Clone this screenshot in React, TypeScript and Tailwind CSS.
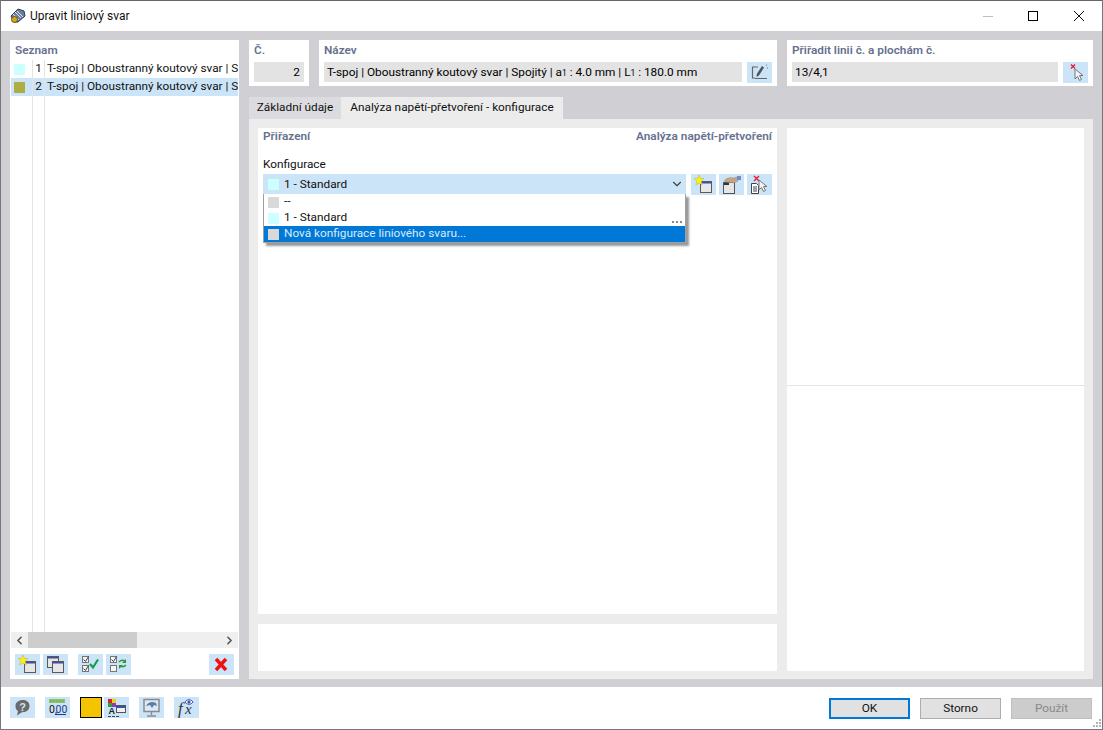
import type { ReactNode } from "react";
import { ChevronDown, ChevronLeft, ChevronRight } from "lucide-react";

const Win = ({ x, y, w = 11, h = 11 }: { x: number; y: number; w?: number; h?: number }) => (
  <g>
    <rect x={x} y={y} width={w} height={h} fill="#e6e6e6" stroke="#5a5a5a" />
    <rect x={x + 0.5} y={y + 0.5} width={w - 1} height={1.5} fill="#3b4fa8" />
  </g>
);

const Star = ({ x, y }: { x: number; y: number }) => (
  <path
    transform={`translate(${x} ${y})`}
    d="M5 0l1.400 3.300L10 3.500 7.300 6l.9 4L5 8 1.800 10l.9-4L0 3.500l3.600-.2z"
    fill="#f8f01c"
    stroke="#b8b04a"
    strokeWidth="0.5"
  />
);

const Box = ({ x, y, check }: { x: number; y: number; check?: boolean }) => (
  <g>
    <rect x={x} y={y} width={6} height={6} fill="#f4f4f4" stroke="#777" />
    {check ? <path d={`M${x + 1} ${y + 3}l2 2 3-5`} fill="none" stroke="#444" /> : null}
  </g>
);

const Icon = ({ children }: { children: ReactNode }) => (
  <svg width="25" height="21" viewBox="0 0 25 21">
    {children}
  </svg>
);

const icons: Record<string, ReactNode> = {
  newWin: (
    <Icon>
      <Win x={9.5} y={7.5} />
      <Star x={3} y={1} />
    </Icon>
  ),
  copyWin: (
    <Icon>
      <Win x={4.5} y={2.5} />
      <Win x={9.5} y={7.5} />
    </Icon>
  ),
  checkAll: (
    <Icon>
      <Box x={4.5} y={2.5} check />
      <Box x={4.5} y={11.5} check />
      <path d="M12 10l3 3.500 5-8" fill="none" stroke="#10a050" strokeWidth="2.200" />
    </Icon>
  ),
  swap: (
    <Icon>
      <Box x={4.5} y={2.5} check />
      <Box x={4.5} y={11.5} />
      <path d="M13 8c2-2 4-2 6-1M20 11c-2 2-4 2-6 1" fill="none" stroke="#2a9a3a" strokeWidth="1.500" />
      <path d="M20 5v4h-4M13 15v-4h4" fill="#2a9a3a" />
    </Icon>
  ),
  del: (
    <Icon>
      <path d="M7 5l10 11M17 5L7 16" stroke="#f01010" strokeWidth="3.400" />
    </Icon>
  ),
  edit: (
    <Icon>
      <path d="M11 5H5.500v11H8M8 16.500h12" fill="none" stroke="#666" strokeWidth="1.200" />
      <path d="M15 4l2 1.500-5 8-2.500 1.500.3-3z" fill="#555" />
      <path d="M19 3h1M20 6h1" stroke="#777" />
    </Icon>
  ),
  pick: (
    <Icon>
      <path d="M8 2.500l4 4M12 2.500l-4 4" stroke="#e0203a" strokeWidth="1.400" />
      <path d="M12 7v10l2.500-2.500 2 4 2-1-2-4h3.500z" fill="#f4f4f4" stroke="#777" />
    </Icon>
  ),
  hand: (
    <Icon>
      <rect x="4.500" y="8.500" width="11" height="11" fill="#e6e6e6" stroke="#555" />
      <rect x="5" y="9" width="5" height="2" fill="#333" />
      <path d="M5 7c2-3 6-4 10-3l3-1 1 4-4 2-7-1z" fill="#c8a487" stroke="#9a8a7a" strokeWidth="0.5" />
      <rect x="18" y="2" width="4" height="4" fill="#6a8ed0" />
    </Icon>
  ),
  pickDoc: (
    <Icon>
      <path d="M7 2l5 5M12 2L7 7" stroke="#e0203a" strokeWidth="1.400" />
      <path d="M4.500 9.500h5l2 2v8h-7z" fill="#fff" stroke="#444" />
      <path d="M6 13h4M6 15h4M6 17h4" stroke="#444" />
      <path d="M12 6v10l2.500-2.500 2 4 2-1-2-4h3.500z" fill="#f4f4f4" stroke="#777" />
    </Icon>
  ),
  help: (
    <Icon>
      <path d="M13 3c4 0 6.500 2.500 6.500 6s-2.500 6-6 6l-2 .5-4.500 3 1-4.500C6 13 5.500 11 5.500 9c0-3.500 3-6 7.500-6z" fill="#6a6a6a" />
      <text x="12.500" y="13.500" textAnchor="middle" fontSize="11" fontWeight="700" fill="#cce4f7" fontFamily="Liberation Sans, sans-serif">
        ?
      </text>
    </Icon>
  ),
  num: (
    <Icon>
      <rect x="4" y="2" width="16" height="4" fill="#8cc46c" />
      <path d="M6 3v2M9 3v2M12 3v2M15 3v2M18 3v2" stroke="#6aa552" />
      <text x="4" y="16" fontSize="10.500" fill="#111" fontFamily="Roboto, sans-serif">
        0,
      </text>
      <text x="10.500" y="16" fontSize="10.500" fill="#223a8a" fontFamily="Roboto, sans-serif">
        00
      </text>
      <path d="M10 17.500h11" stroke="#223a8a" />
    </Icon>
  ),
  legend: (
    <Icon>
      <rect x="4" y="2" width="4" height="4" fill="#e02020" />
      <rect x="8" y="2" width="4" height="4" fill="#e8d020" />
      <rect x="4" y="6" width="4" height="4" fill="#2fa040" />
      <rect x="8" y="6" width="4" height="4" fill="#8040c0" />
      <text x="4.500" y="17" fontSize="9" fontWeight="700" fill="#222" fontFamily="Liberation Sans, sans-serif">
        A
      </text>
      <path d="M4 19.500h3M8 19.500h3M12 19.500h3" stroke="#444" />
      <rect x="12.500" y="8.500" width="9" height="7" fill="#f0f0f0" stroke="#555" />
      <rect x="13" y="9" width="8" height="2" fill="#3b4fa8" />
    </Icon>
  ),
  monitor: (
    <Icon>
      <rect x="5" y="2.500" width="15" height="12" fill="#dbe9f6" stroke="#8a8a8a" strokeWidth="1.500" />
      <path d="M7 9c2-4 6-5 10-3l1 3-3-1-2 3-2-3z" fill="#5a7ea8" />
      <path d="M12.500 15v3M8 19h9" stroke="#8a8a8a" strokeWidth="1.400" />
    </Icon>
  ),
  fx: (
    <Icon>
      <text x="4" y="17" fontSize="17" fontStyle="italic" fill="#333" fontFamily="Liberation Serif, serif">
        f
      </text>
      <text x="11" y="17" fontSize="15" fontStyle="italic" fill="#333" fontFamily="Liberation Serif, serif">
        x
      </text>
      <path d="M11 5c2-3 6-3 8 0-2 3-6 3-8 0z" fill="#fff" stroke="#3b4fa8" />
      <circle cx="15" cy="5" r="1.600" fill="#3b4fa8" />
    </Icon>
  ),
};

const ToolBtn = ({ name }: { name: string }) => (
  <button className="flex h-[21px] w-[25px] shrink-0 items-center justify-center bg-[#cce4f7]">{icons[name]}</button>
);

const Label = ({ children }: { children: ReactNode }) => (
  <div className="h-[22px] pl-[5px] pt-[1px] leading-[18px] font-semibold text-[#66718f]">{children}</div>
);

const Field = ({ children, className }: { children: ReactNode; className: string }) => (
  <div className={`h-[20px] whitespace-nowrap bg-[#e3e3e3] leading-[21px] text-black ${className}`}>{children}</div>
);

const Sub = ({ children }: { children: ReactNode }) => <span className="text-[8.500px]">{children}</span>;

const ListRow = ({ no, color, selected }: { no: number; color: string; selected?: boolean }) => (
  <div className={`mx-[1px] flex h-[18px] items-center overflow-hidden whitespace-nowrap ${selected ? "bg-[#cce4f7]" : ""}`}>
    <span className={`ml-[3px] h-[11px] w-[11px] shrink-0 ${color}`} />
    <span className="w-[17px] shrink-0 text-right">{no}</span>
    <span className="ml-[5px]">T-spoj | Oboustranný koutový svar | Spojitý</span>
  </div>
);

const Option = ({ color, text, active }: { color: string; text: string; active?: boolean }) => (
  <div className={`flex h-[16px] items-center ${active ? "bg-[#0078d7] text-[#dce9f7]" : ""}`}>
    <span className={`ml-[4px] h-[11px] w-[11px] ${color}`} />
    <span className="ml-[5px] leading-none">{text}</span>
  </div>
);

const FootBtn = ({ text, className }: { text: string; className: string }) => (
  <button className={`h-[21px] w-[81px] leading-none ${className}`}>{text}</button>
);

export default function App() {
  return (
    <div className="flex h-[730px] w-[1103px] flex-col overflow-hidden border border-t-0 border-[#777] bg-white font-['Roboto','Open_Sans',sans-serif] text-[11.800px] text-[#111]">
      {/* title bar */}
      <header className="flex h-[31px] shrink-0 items-center border-t border-[#666]">
        <svg width="18" height="18" viewBox="0 0 18 18" className="ml-[8px]">
          <path d="M2 9l7-7 6 2 1 5-7 6H5z" fill="#6a7fa0" stroke="#2f3b52" />
          <path d="M6 5l6 6M8 4l6 6M4 7l6 6" stroke="#dfe6ef" />
          <circle cx="5.500" cy="12.500" r="3" fill="#d9a520" stroke="#6a5410" />
        </svg>
        <span className="ml-[3px] text-[12px]">Upravit liniový svar</span>
        <div className="ml-auto flex items-center">
          <span className="mr-[35px] h-px w-[10px] bg-[#bdbdbd]" />
          <span className="mr-[36px] h-[10px] w-[10px] border border-black" />
          <svg width="10" height="10" viewBox="0 0 10 10" className="mr-[18px]">
            <path d="M0 0l10 10M10 0L0 10" stroke="#111" />
          </svg>
        </div>
      </header>

      {/* dialog body */}
      <main className="flex min-h-0 flex-1 gap-[10px] bg-[#d0cfd4] px-[9px] pb-[8px] pt-[9px]">
        <aside className="flex w-[229px] shrink-0 flex-col bg-white">
          <Label>Seznam</Label>
          <div className="relative min-h-0 flex-1 -mt-[2px]">
            <div className="relative">
              <ListRow no={1} color="bg-[#ccffff]" />
              <ListRow no={2} color="bg-[#adad42]" selected />
            </div>
            <span className="absolute bottom-0 left-[22px] top-0 w-px bg-[#e4e4e4]" />
            <span className="absolute bottom-0 left-[34px] top-0 w-px bg-[#e4e4e4]" />
          </div>
          <div className="mx-[1px] flex h-[16px] items-center bg-[#efefef]">
            <span className="flex w-[17px] justify-center">
              <ChevronLeft size={13} strokeWidth={3} color="#555" />
            </span>
            <span className="h-full w-[109px] bg-[#cdcdcd]" />
            <span className="ml-auto flex w-[17px] justify-center">
              <ChevronRight size={13} strokeWidth={3} color="#555" />
            </span>
          </div>
          <div className="flex h-[31px] items-start px-[5px] pt-[6px]">
            <ToolBtn name="newWin" />
            <span className="w-[3px]" />
            <ToolBtn name="copyWin" />
            <span className="w-[10px]" />
            <ToolBtn name="checkAll" />
            <span className="w-[3px]" />
            <ToolBtn name="swap" />
            <span className="ml-auto" />
            <ToolBtn name="del" />
          </div>
        </aside>

        <section className="flex min-w-0 flex-1 flex-col">
          <div className="flex h-[46px] shrink-0 gap-[10px]">
            <div className="w-[60px] bg-white">
              <Label>Č.</Label>
              <Field className="mx-[5px] pr-[4px] text-right">2</Field>
            </div>
            <div className="w-[458px] bg-white">
              <Label>Název</Label>
              <div className="flex gap-[5px] px-[5px]">
                <Field className="flex-1 pl-[3px]">
                  T-spoj | Oboustranný koutový svar | Spojitý | a<Sub>1</Sub> : 4.0 mm | L<Sub>1</Sub> : 180.0 mm
                </Field>
                <ToolBtn name="edit" />
              </div>
            </div>
            <div className="flex-1 bg-white">
              <Label>Přiřadit linii č. a plochám č.</Label>
              <div className="flex gap-[5px] px-[5px]">
                <Field className="flex-1 pl-[3px]">13/4,1</Field>
                <ToolBtn name="pick" />
              </div>
            </div>
          </div>

          <div className="mt-[11px] flex h-[22px] shrink-0 items-center">
            <div className="flex h-full w-[92px] items-center justify-center bg-[#dcdce0]">Základní údaje</div>
            <div className="flex h-full w-[222px] items-center justify-center bg-[#ececec]">Analýza napětí-přetvoření - konfigurace</div>
          </div>

          <div className="flex min-h-0 flex-1 gap-[10px] bg-[#ececec] px-[9px] pb-[8px] pt-[9px]">
            <div className="flex w-[519px] shrink-0 flex-col gap-[10px]">
              <div className="min-h-0 flex-1 bg-white px-[5px]">
                <div className="flex h-[18px] items-center justify-between font-semibold text-[#66718f]">
                  <span>Přiřazení</span>
                  <span>Analýza napětí-přetvoření</span>
                </div>
                <div className="mt-[9px] h-[19px] leading-[18px]">Konfigurace</div>
                <div className="flex">
                  <div className="relative w-[423px] shrink-0">
                    <div className="flex h-[20px] items-center bg-[#cce4f7]">
                      <span className="ml-[5px] h-[11px] w-[11px] bg-[#ccffff]" />
                      <span className="ml-[5px] pt-px">1 - Standard</span>
                      <ChevronDown size={14} className="ml-auto mr-[2px]" color="#444" />
                    </div>
                    {/* open dropdown */}
                    <div className="absolute left-0 top-[20px] z-10 h-[49px] w-full border border-t-0 border-[#a0a0a0] bg-white shadow-[3px_3px_2px_#999999]">
                      <Option color="bg-[#d9d9d9]" text="--" />
                      <div className="relative">
                        <Option color="bg-[#ccffff]" text="1 - Standard" />
                        <span className="absolute bottom-[3px] right-[3px] h-[2px] w-[10px] bg-[linear-gradient(90deg,#888_2px,transparent_2px,transparent_4px,#888_4px,#888_6px,transparent_6px,transparent_8px,#888_8px)]" />
                      </div>
                      <Option color="bg-[#d9d9d9]" text="Nová konfigurace liniového svaru..." active />
                    </div>
                  </div>
                  <div className="ml-[5px] flex gap-[3px]">
                    <ToolBtn name="newWin" />
                    <ToolBtn name="hand" />
                    <ToolBtn name="pickDoc" />
                  </div>
                </div>
              </div>
              <div className="h-[47px] shrink-0 bg-white" />
            </div>
            <div className="flex min-w-0 flex-1 flex-col bg-white">
              <div className="h-[258px] border-b border-[#e4e4e4]" />
            </div>
          </div>
        </section>
      </main>

      {/* footer */}
      <footer className="relative flex h-[42px] shrink-0 items-start bg-white pl-[9px] pt-[10px]">
        <ToolBtn name="help" />
        <span className="w-[10px]" />
        <ToolBtn name="num" />
        <span className="w-[10px]" />
        <span className="h-[21px] w-[22px] border-[1.5px] border-black bg-[#f5c400]" />
        <span className="w-[2px]" />
        <ToolBtn name="legend" />
        <span className="w-[10px]" />
        <ToolBtn name="monitor" />
        <span className="w-[10px]" />
        <ToolBtn name="fx" />
        <div className="ml-auto mt-[1px] flex gap-[10px] pr-[10px]">
          <FootBtn text="OK" className="border-2 border-[#0078d7] bg-[#e1e1e1]" />
          <FootBtn text="Storno" className="border border-[#adadad] bg-[#e1e1e1]" />
          <FootBtn text="Použít" className="border border-[#bfbfbf] bg-[#cccccc] text-[#8a8a8a]" />
        </div>
        <svg width="10" height="10" viewBox="0 0 10 10" className="absolute bottom-[1px] right-[1px]">
          <path d="M8 1h2v2H8zM5 4h2v2H5zM8 4h2v2H8zM2 7h2v2H2zM5 7h2v2H5zM8 7h2v2H8z" fill="#b5b5b5" />
        </svg>
      </footer>
    </div>
  );
}
